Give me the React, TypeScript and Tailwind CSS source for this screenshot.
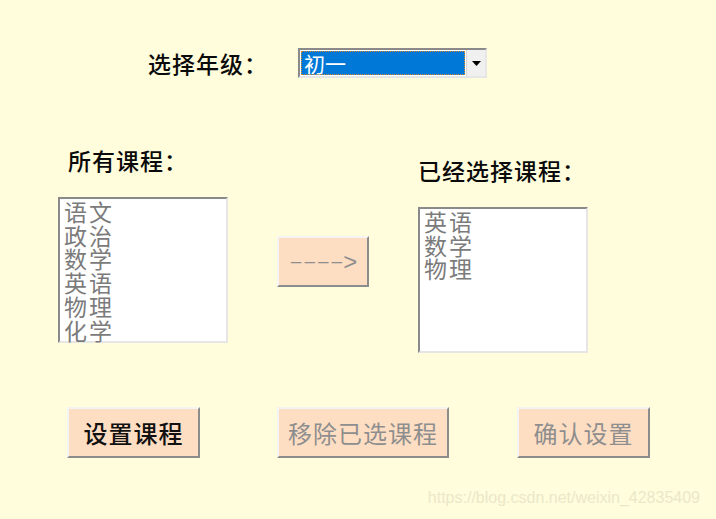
const allCourses = ["语文", "政治", "数学", "英语", "物理", "化学"];
const picked = ["英语", "数学", "物理"];

const cjk = "font-['Noto_Sans_CJK_SC','Noto_Sans',sans-serif]";

const ListBox = ({ items }: { items: string[] }) => (
  <div className="w-[170px] h-[146px] bg-white border-2 border-t-[#8a8a8a] border-l-[#8a8a8a] border-b-[#e6e6e6] border-r-[#e6e6e6] pl-[4px] pt-[1px]">
    {items.map((c) => (
      <div key={c} className="text-[23px] leading-[23.7px] text-[#7b7b7b] tracking-[2px]">
        {c}
      </div>
    ))}
  </div>
);

const PeachButton = ({
  label,
  width,
  dark,
}: {
  label: string;
  width: string;
  dark?: boolean;
}) => (
  <button
    className={`${width} h-[51px] bg-[#fedec3] border-2 border-t-[#f4f4f4] border-l-[#f4f4f4] border-b-[#8c8c8c] border-r-[#8c8c8c] flex items-center justify-center text-[24px] tracking-[1px] ${
      dark ? "text-[#111] font-medium" : "text-[#8e8e8e]"
    }`}
  >
    {label}
  </button>
);

export default function App() {
  return (
    <div className={`w-[716px] h-[519px] bg-[#fffddc] overflow-hidden ${cjk}`}>
      {/* grade select */}
      <div className="flex items-center pt-[48px] pl-[148px]">
        <div className="text-[23px] leading-[30px] text-[#0a0a0a] font-medium tracking-[1px] w-[150px]">选择年级：</div>
        <div className="w-[189px] h-[30px] flex bg-white border-2 border-t-[#8a8a8a] border-l-[#8a8a8a] border-b-[#e6e6e6] border-r-[#e6e6e6]">
          <div className="flex-1 m-[1px] bg-[#0078d7] outline-1 outline-dotted outline-[#d08a2a] -outline-offset-1 text-white text-[21px] leading-[24px] pl-[3px]">
            初一
          </div>
          <div className="w-[19px] bg-[#f0f0f0] border-l border-[#d8d8d8] flex items-center justify-center">
            <svg width="9" height="5" viewBox="0 0 9 5">
              <path d="M0 0h9L4.5 5z" fill="#000" />
            </svg>
          </div>
        </div>
      </div>

      {/* course lists */}
      <div className="flex items-start mt-[67px]">
        <div className="ml-[58px]">
          <div className="pl-[10px] text-[23px] leading-[30px] text-[#0a0a0a] font-medium tracking-[1px]">所有课程：</div>
          <div className="mt-[22px]">
            <ListBox items={allCourses} />
          </div>
        </div>

        <div className="ml-[49px] mt-[91px]">
          <button className="w-[92px] h-[51px] bg-[#fedec3] border-2 border-t-[#f4f4f4] border-l-[#f4f4f4] border-b-[#8c8c8c] border-r-[#8c8c8c] flex items-center justify-center pl-[2px] text-[#8e8e8e] font-['Liberation_Sans',sans-serif]">
            <span className="text-[19px] tracking-[3px]">––––</span>
            <span className="text-[24px] leading-none font-light -ml-[2px]">&gt;</span>
          </button>
        </div>

        <div className="ml-[49px] mt-[10px]">
          <div className="text-[23px] leading-[30px] text-[#0a0a0a] font-medium tracking-[1px]">已经选择课程：</div>
          <div className="mt-[22px]">
            <ListBox items={picked} />
          </div>
        </div>
      </div>

      {/* action buttons */}
      <div className="flex mt-[54px] pl-[67px]">
        <PeachButton label="设置课程" width="w-[133px]" dark />
        <div className="ml-[77px]">
          <PeachButton label="移除已选课程" width="w-[172px]" />
        </div>
        <div className="ml-[68px]">
          <PeachButton label="确认设置" width="w-[133px]" />
        </div>
      </div>

      <div className="flex justify-end pr-[16px] mt-[28px] text-[16px] text-[#ebe7c9] font-['Liberation_Sans',sans-serif]">
        https://blog.csdn.net/weixin_42835409
      </div>
    </div>
  );
}
